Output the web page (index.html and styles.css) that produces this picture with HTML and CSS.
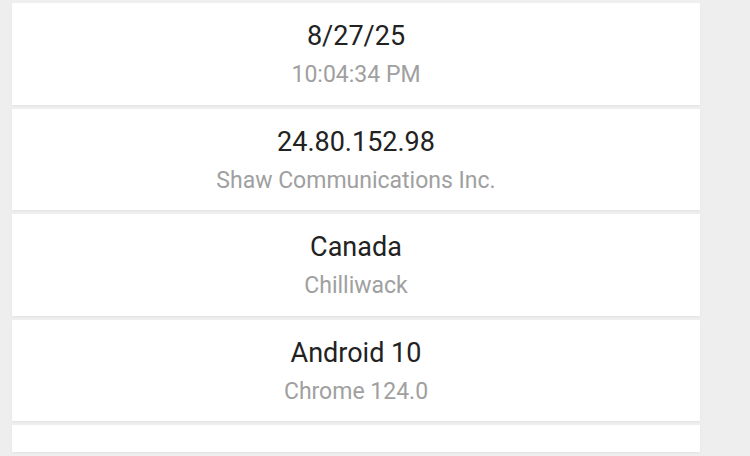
FILE: index.html
```html
<!DOCTYPE html>
<html lang="en">
<head>
    <meta charset="UTF-8">
    <meta name="viewport" content="width=device-width, initial-scale=1.0">
    <title>Visit Details</title>
    <link rel="stylesheet" href="styles.css">
</head>
<body>
    <div class="visit-list">
        <div class="visit-card">
            <div class="visit-main">8/27/25</div>
            <div class="visit-sub">10:04:34 PM</div>
        </div>
        <div class="visit-card">
            <div class="visit-main">24.80.152.98</div>
            <div class="visit-sub">Shaw Communications Inc.</div>
        </div>
        <div class="visit-card">
            <div class="visit-main">Canada</div>
            <div class="visit-sub">Chilliwack</div>
        </div>
        <div class="visit-card">
            <div class="visit-main">Android 10</div>
            <div class="visit-sub">Chrome 124.0</div>
        </div>
        <div class="visit-card visit-card-empty"></div>
        <div class="visit-card visit-card-empty"></div>
    </div>
</body>
</html>
```
FILE: styles.css
```css
html, body {
    margin: 0;
    padding: 0;
    height: 100%;
    overflow: hidden;
}
body {
    font-family: Roboto, "Noto Sans", sans-serif;
    background: #eeeeee;
}
.visit-list {
    width: 688px;
    margin-left: 12px;
    padding-top: 3px;
    display: flex;
    flex-direction: column;
    gap: 4px;
}
.visit-card {
    background: #ffffff;
    height: 101.5px;
    flex-shrink: 0;
    box-sizing: border-box;
    padding-top: 16px;
    text-align: center;
    box-shadow: 0 1px 2px rgba(0,0,0,0.05);
}
.visit-main {
    font-size: 27px;
    line-height: 34px;
    color: #222222;
}
.visit-sub {
    margin-top: 5px;
    font-size: 23px;
    line-height: 34px;
    color: #a0a0a0;
}
.visit-card-empty {
    height: 27px;
    padding: 0;
}
```
